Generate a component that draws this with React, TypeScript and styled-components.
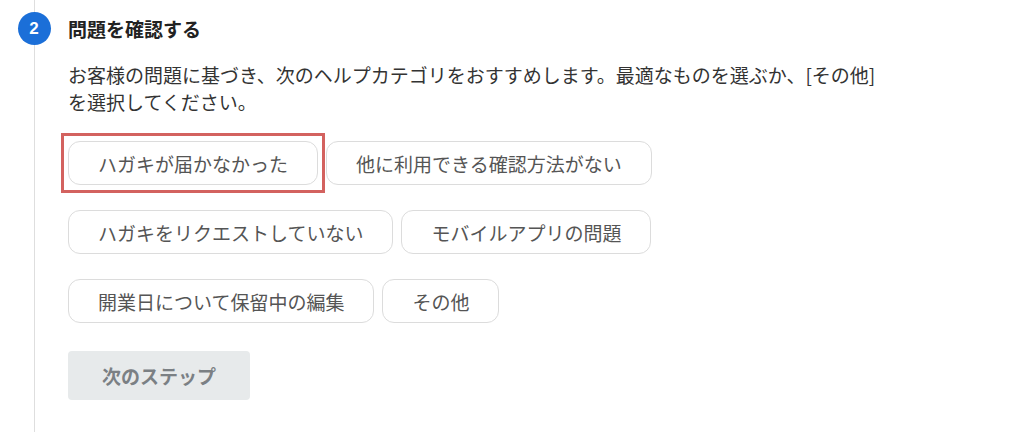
import React, { useState } from "react";
import styled, { createGlobalStyle } from "styled-components";

const GlobalStyle = createGlobalStyle`
  html, body {
    margin: 0;
    padding: 0;
    background: #ffffff;
  }
  body {
    font-family: "Noto Sans CJK JP", "Noto Sans", sans-serif;
    color: #333333;
  }
`;

const Step = styled.div`
  display: grid;
  grid-template-columns: 68px 1fr;
  min-height: 432px;
`;

const Rail = styled.div`
  display: flex;
  flex-direction: column;
  align-items: center;
`;

const RailLine = styled.div<{ $grow?: boolean }>`
  width: 1px;
  background: #dedede;
  height: ${(p) => (p.$grow ? "auto" : "12px")};
  flex: ${(p) => (p.$grow ? "1" : "none")};
`;

const StepNumber = styled.div`
  width: 33px;
  height: 33px;
  border-radius: 50%;
  background: #1b6fd8;
  color: #ffffff;
  font-family: "Liberation Sans", Arial, sans-serif;
  font-weight: bold;
  font-size: 17px;
  display: flex;
  align-items: center;
  justify-content: center;
`;

const Content = styled.div`
  padding-top: 12px;
  max-width: 826px;
`;

const Title = styled.h2`
  margin: 0;
  font-size: 19px;
  line-height: 33px;
  font-weight: bold;
  color: #222222;
`;

const Description = styled.p`
  margin: 16px 0 0;
  font-size: 19px;
  line-height: 27px;
  color: #333333;
`;

const Options = styled.div`
  display: flex;
  flex-wrap: wrap;
  gap: 25px 8px;
  margin-top: 26px;
`;

const Chip = styled.button<{ $highlight?: boolean }>`
  position: relative;
  height: 44px;
  padding: 0 29px;
  border: 1px solid #dcdcdc;
  border-radius: 12px;
  background: #ffffff;
  font-family: inherit;
  font-size: 19px;
  color: #555555;
  cursor: pointer;

  &::after {
    content: "";
    display: ${(p) => (p.$highlight ? "block" : "none")};
    position: absolute;
    inset: -9px -8px;
    border: 3px solid #d3625f;
    pointer-events: none;
  }
`;

const NextButton = styled.button`
  margin-top: 28px;
  height: 49px;
  padding: 0 34px;
  border: none;
  border-radius: 4px;
  background: #e7eaeb;
  color: #7b8084;
  font-family: inherit;
  font-size: 19px;
  font-weight: bold;
`;

const options = [
  "ハガキが届かなかった",
  "他に利用できる確認方法がない",
  "ハガキをリクエストしていない",
  "モバイルアプリの問題",
  "開業日について保留中の編集",
  "その他",
];

const App = () => {
  const [selected, setSelected] = useState<string | null>(null);

  return (
    <>
      <GlobalStyle />
      <Step>
        <Rail>
          <RailLine />
          <StepNumber>2</StepNumber>
          <RailLine $grow />
        </Rail>
        <Content>
          <Title>問題を確認する</Title>
          <Description>
            お客様の問題に基づき、次のヘルプカテゴリをおすすめします。最適なものを選ぶか、[その他]
            を選択してください。
          </Description>
          <Options>
            {options.map((option, i) => (
              <Chip
                key={option}
                $highlight={i === 0}
                onClick={() => setSelected(option)}
              >
                {option}
              </Chip>
            ))}
          </Options>
          <NextButton disabled={selected === null}>次のステップ</NextButton>
        </Content>
      </Step>
    </>
  );
};

export default App;
